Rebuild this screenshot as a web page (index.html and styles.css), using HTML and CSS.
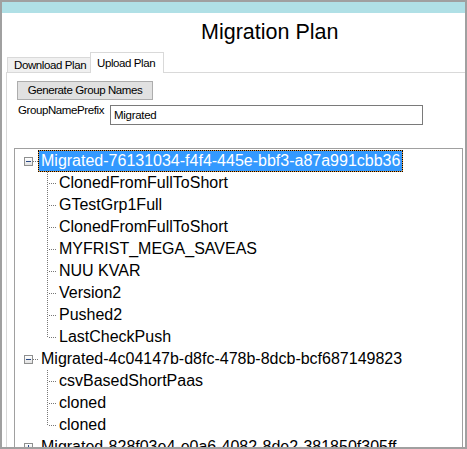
FILE: index.html
```html
<!DOCTYPE html>
<html>
<head>
<meta charset="utf-8">
<link rel="stylesheet" href="styles.css">
</head>
<body>
<div class="window">
  <div class="titlebar"></div>
  <h1 class="title">Migration Plan</h1>
  <div class="tabs">
    <div class="tab tab-inactive">Download Plan</div>
    <div class="tab tab-active">Upload Plan</div>
  </div>
  <div class="page">
    <button class="btn">Generate Group Names</button>
    <div class="field-row">
      <div class="field-label">GroupNamePrefix</div>
      <div class="textbox">Migrated</div>
    </div>
    <div class="tree">
      <div class="row">
        <span class="indent"></span><span class="exp"></span><span class="stub"></span><span class="label sel">Migrated-76131034-f4f4-445e-bbf3-a87a991cbb36</span>
      </div>
      <div class="row"><span class="branch"></span><span class="label">ClonedFromFullToShort</span></div>
      <div class="row"><span class="branch"></span><span class="label">GTestGrp1Full</span></div>
      <div class="row"><span class="branch"></span><span class="label">ClonedFromFullToShort</span></div>
      <div class="row"><span class="branch"></span><span class="label">MYFRIST_MEGA_SAVEAS</span></div>
      <div class="row"><span class="branch"></span><span class="label">NUU KVAR</span></div>
      <div class="row"><span class="branch"></span><span class="label">Version2</span></div>
      <div class="row"><span class="branch"></span><span class="label">Pushed2</span></div>
      <div class="row"><span class="branch last"></span><span class="label">LastCheckPush</span></div>
      <div class="row">
        <span class="indent"></span><span class="exp"></span><span class="stub"></span><span class="label">Migrated-4c04147b-d8fc-478b-8dcb-bcf687149823</span>
      </div>
      <div class="row"><span class="branch"></span><span class="label">csvBasedShortPaas</span></div>
      <div class="row"><span class="branch"></span><span class="label">cloned</span></div>
      <div class="row"><span class="branch last"></span><span class="label">cloned</span></div>
      <div class="row">
        <span class="indent"></span><span class="exp plus"></span><span class="stub"></span><span class="label">Migrated-828f03e4-e0a6-4082-8de2-381850f305ff</span>
      </div>
    </div>
  </div>
</div>
</body>
</html>
```
FILE: styles.css
```css
html, body {
  margin: 0;
  padding: 0;
}
body {
  font-family: "Liberation Sans", Arial, sans-serif;
  background: #fff;
  color: #000;
}
.window {
  width: 467px;
  height: 449px;
  box-sizing: border-box;
  border: 2px solid #a0a0a0;
  overflow: hidden;
  background: #fff;
}
.titlebar {
  height: 11px;
  background: #b0e0e6;
}
.title {
  margin: 7px 0 0;
  padding-left: 199px;
  font-size: 21.5px;
  line-height: 24px;
  font-weight: normal;
}
.tabs {
  display: flex;
  align-items: flex-end;
  height: 20px;
  margin: 8px 0 0 4px;
}
.tab {
  box-sizing: border-box;
  border: 1px solid #d9d9d9;
  border-bottom: none;
  font-size: 11.5px;
  letter-spacing: -0.4px;
  line-height: 12px;
  padding-left: 6px;
  white-space: nowrap;
}
.tab-inactive {
  margin-left: 1px;
  width: 83px;
  height: 15px;
  border-right: none;
  background: #f0f0f0;
  padding-top: 1px;
}
.tab-active {
  position: relative;
  z-index: 1;
  width: 74px;
  height: 21px;
  margin-bottom: -1px;
  background: #fff;
  padding-top: 4px;
}
.page {
  margin-left: 4px;
  border-top: 1px solid #d9d9d9;
  border-left: 1px solid #d9d9d9;
  height: 400px;
}
.btn {
  display: block;
  margin: 8px 0 0 10px;
  width: 136px;
  height: 19px;
  box-sizing: border-box;
  border: 1px solid #adadad;
  background: #e1e1e1;
  padding: 0;
  font-family: "Liberation Sans", Arial, sans-serif;
  font-size: 11.5px;
  letter-spacing: -0.4px;
  line-height: 17px;
  color: #000;
  text-align: center;
}
.field-row {
  display: flex;
  margin: 3px 0 0 11px;
}
.field-label {
  width: 92px;
  font-size: 11.5px;
  letter-spacing: -0.4px;
  line-height: 12px;
  padding-top: 1px;
}
.textbox {
  margin-top: 2px;
  width: 313px;
  height: 20px;
  box-sizing: border-box;
  border: 1px solid #7a7a7a;
  padding-left: 3px;
  font-size: 11.5px;
  letter-spacing: -0.3px;
  line-height: 18px;
}
.tree {
  margin: 23px 2px 0 7px;
  border: 1px solid #a0a0a0;
  height: 330px;
  box-sizing: border-box;
  padding-top: 1px;
  overflow: hidden;
}
.row {
  display: flex;
  height: 22px;
  font-size: 16px;
  line-height: 20px;
}
.indent {
  flex: none;
  width: 9px;
}
.exp {
  flex: none;
  width: 9px;
  height: 9px;
  margin-top: 7px;
  box-sizing: border-box;
  border: 1px solid #8e8f8f;
  background: linear-gradient(#ffffff, #e2e2e2);
  display: grid;
  place-items: center;
}
.exp::before {
  content: "";
  grid-area: 1 / 1;
  width: 5px;
  height: 1px;
  background: #2a4a86;
}
.exp.plus::after {
  content: "";
  grid-area: 1 / 1;
  width: 1px;
  height: 5px;
  background: #2a4a86;
}
.stub {
  flex: none;
  width: 5px;
  background-image: repeating-linear-gradient(to right, #777 0 1px, transparent 1px 2px);
  background-size: 5px 1px;
  background-position: 0 11px;
  background-repeat: no-repeat;
}
.branch {
  flex: none;
  width: 41px;
  background-image:
    repeating-linear-gradient(to bottom, #777 0 1px, transparent 1px 2px),
    repeating-linear-gradient(to right, #777 0 1px, transparent 1px 2px);
  background-size: 1px 100%, 8px 1px;
  background-position: 32px 0, 34px 11px;
  background-repeat: no-repeat;
}
.branch.last {
  background-size: 1px 12px, 8px 1px;
}
.label {
  border: 1px solid transparent;
  padding: 0 2px;
  white-space: nowrap;
  color: #000;
}
.label.sel {
  color: #fff;
  border: 1px dotted #000;
  background: linear-gradient(#3399ff, #3399ff) padding-box, #e89a3c;
}
```
